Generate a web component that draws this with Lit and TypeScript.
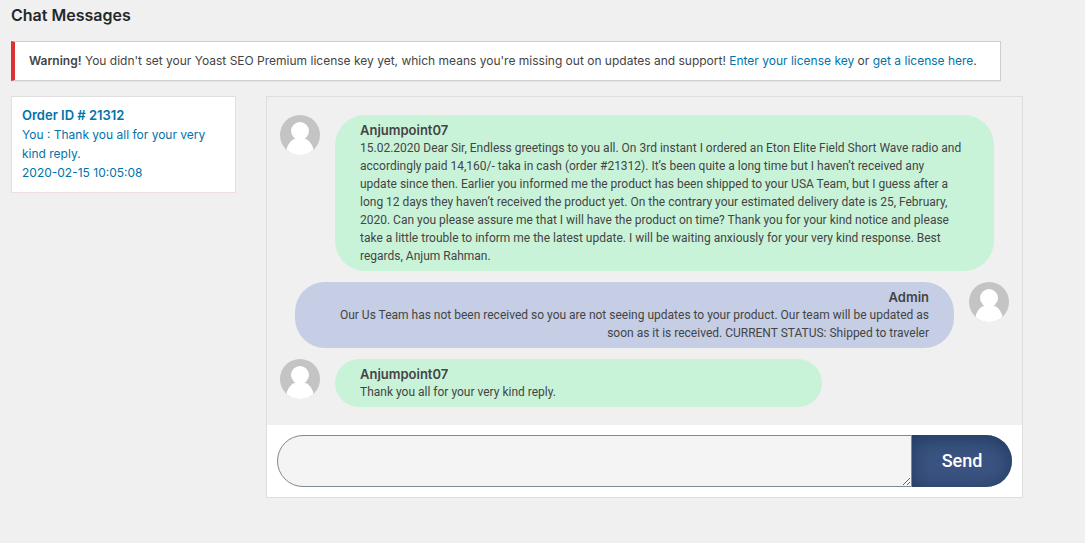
import { LitElement, html, css } from "lit";
import { customElement, property, state } from "lit/decorators.js";
import { classMap } from "lit/directives/class-map.js";

interface Message {
  author: string;
  text: string;
  own?: boolean;
  short?: boolean;
}

const MESSAGES: Message[] = [
  {
    author: "Anjumpoint07",
    text: "15.02.2020 Dear Sir, Endless greetings to you all. On 3rd instant I ordered an Eton Elite Field Short Wave radio and accordingly paid 14,160/- taka in cash (order #21312). It’s been quite a long time but I haven’t received any update since then. Earlier you informed me the product has been shipped to your USA Team, but I guess after a long 12 days they haven’t received the product yet. On the contrary your estimated delivery date is 25, February, 2020. Can you please assure me that I will have the product on time? Thank you for your kind notice and please take a little trouble to inform me the latest update. I will be waiting anxiously for your very kind response. Best regards, Anjum Rahman.",
  },
  {
    author: "Admin",
    text: "Our Us Team has not been received so you are not seeing updates to your product. Our team will be updated as soon as it is received. CURRENT STATUS: Shipped to traveler",
    own: true,
  },
  { author: "Anjumpoint07", text: "Thank you all for your very kind reply.", short: true },
];

@customElement("chat-message")
class ChatMessage extends LitElement {
  @property({ attribute: false }) message!: Message;

  static styles = css`
    :host {
      display: block;
    }
    .row {
      display: flex;
      align-items: flex-start;
      gap: 15px;
      padding-right: 15px;
    }
    .row.own {
      flex-direction: row-reverse;
      padding: 0 0 0 15px;
      text-align: right;
    }
    .avatar {
      flex: none;
      width: 40px;
      height: 40px;
      border-radius: 50%;
    }
    .bubble {
      flex: 1;
      min-width: 0;
      box-sizing: border-box;
      padding: 6px 32px 6px 25px;
      border-radius: 30px;
      background: #c9f3d9;
      font-size: 12px;
      line-height: 18px;
    }
    .own .bubble {
      padding: 6px 25px 6px 32px;
      background: #c5cee5;
    }
    .short .bubble {
      flex: 0 1 487px;
    }
    .author {
      margin: 0;
      font-family: Inter, sans-serif;
      font-size: 13px;
      line-height: 18px;
      font-weight: 600;
    }
    .text {
      margin: 0;
    }
  `;

  render() {
    const { author, text, own = false, short = false } = this.message;
    return html`
      <article class=${classMap({ row: true, own, short })}>
        <svg class="avatar" viewBox="0 0 40 40" aria-hidden="true">
          <rect width="40" height="40" fill="#c4c4c4" />
          <ellipse cx="20" cy="16" rx="9" ry="9" fill="#fff" />
          <ellipse cx="20" cy="38" rx="13.8" ry="15.500" fill="#fff" />
        </svg>
        <div class="bubble">
          <h2 class="author">${author}</h2>
          <p class="text">${text}</p>
        </div>
      </article>
    `;
  }
}

@customElement("app-root")
class AppRoot extends LitElement {
  @state() private draft = "";

  static styles = css`
    :host {
      display: block;
      box-sizing: border-box;
      min-height: 100vh;
      padding: 5px 62px 16px 11px;
      background: #f0f0f0;
      color: #444;
      font-family: Roboto, sans-serif;
    }
    .title {
      margin: 0 0 16px;
      color: #23282d;
      font: 600 16px/20px Inter, sans-serif;
    }
    .notice {
      box-sizing: border-box;
      margin: 0 22px 15px 0;
      padding: 9px 14px;
      border: 1px solid #ccd0d4;
      border-left: 4px solid #dc3232;
      background: #fff;
      box-shadow: 0 1px 1px rgba(0, 0, 0, 0.04);
      font: 12px/20px Inter, sans-serif;
    }
    a {
      color: #0073aa;
      text-decoration: none;
    }
    .columns {
      display: grid;
      grid-template-columns: 225px minmax(0, 1fr);
      align-items: start;
      gap: 30px;
    }
    .thread {
      display: block;
      padding: 9px 10px 10px;
      border: 1px solid #dfdfe2;
      border-bottom-color: #ecdde8;
      background: #fff;
      font: 12px/19px Inter, sans-serif;
    }
    .thread strong,
    .thread span {
      display: block;
    }
    .thread strong,
    .notice strong {
      font-weight: 600;
    }
    .thread strong {
      font-size: 13px;
    }
    .chat {
      border: 1px solid #dedede;
    }
    .messages {
      display: flex;
      flex-direction: column;
      gap: 11px;
      padding: 18px 13px;
    }
    .composer {
      display: flex;
      padding: 10px;
      background: #fff;
    }
    .input {
      flex: 1;
      min-width: 0;
      box-sizing: border-box;
      height: 52px;
      margin: 0;
      padding: 14px 24px;
      border: 1px solid #7e8993;
      border-radius: 26px 0 0 26px;
      background: #f4f4f4;
      color: inherit;
      font: 14px/20px Inter, sans-serif;
      resize: vertical;
      outline: none;
    }
    .send {
      width: 100px;
      padding: 0;
      border: 0;
      border-radius: 0 26px 26px 0;
      background: #3b5380;
      box-shadow: inset 0 3px 20px #1f3a60;
      color: #fff;
      font: 500 18px/24px Roboto, sans-serif;
      cursor: pointer;
    }
  `;

  render() {
    return html`
      <h1 class="title">Chat Messages</h1>
      <div class="notice" role="alert">
        <strong>Warning!</strong> You didn't set your Yoast SEO Premium license key yet, which means you're missing out
        on updates and support! <a href="#license">Enter your license key</a> or
        <a href="#buy">get a license here</a>.
      </div>
      <div class="columns">
        <a class="thread" href="#order-21312">
          <strong>Order ID # 21312</strong>
          <span>You : Thank you all for your very kind reply.</span>
          <span>2020-02-15 10:05:08</span>
        </a>
        <main class="chat">
          <div class="messages">
            ${MESSAGES.map((m) => html`<chat-message .message=${m}></chat-message>`)}
          </div>
          <form class="composer" @submit=${(e: Event) => e.preventDefault()}>
            <textarea
              class="input"
              aria-label="Message"
              .value=${this.draft}
              @input=${(e: Event) => (this.draft = (e.target as HTMLTextAreaElement).value)}
            ></textarea>
            <button class="send" type="submit">Send</button>
          </form>
        </main>
      </div>
    `;
  }
}
